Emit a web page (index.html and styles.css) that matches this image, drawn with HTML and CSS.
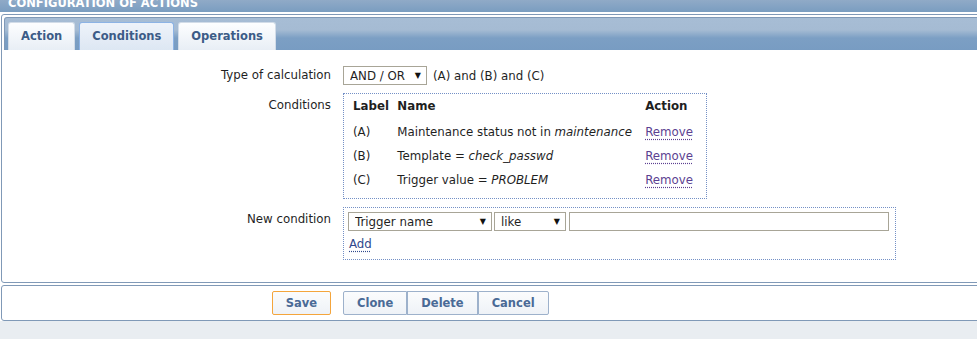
FILE: index.html
```html
<!DOCTYPE html>
<html lang="en">
<head>
    <meta charset="UTF-8">
    <title>Configuration of actions</title>
    <link rel="stylesheet" href="styles.css">
</head>
<body>
<div class="page">

    <div class="header">
        <span class="header-title">CONFIGURATION OF ACTIONS</span>
    </div>

    <!-- Action form -->
    <div class="box">
        <div class="tabs">
            <a class="tab" href="#">Action</a>
            <a class="tab active" href="#">Conditions</a>
            <a class="tab" href="#">Operations</a>
        </div>

        <div class="form-list">
            <div class="form-row">
                <label>Type of calculation</label>
                <div class="field inline">
                    <div class="select-wrap calc-select">
                        <select><option>AND / OR</option></select>
                        <span class="caret">&#9660;</span>
                    </div>
                    <span>(A) and (B) and (C)</span>
                </div>
            </div>

            <div class="form-row top">
                <label>Conditions</label>
                <div class="field">
                    <div class="dotted-box cond-box">
                        <table class="cond-table">
                            <tr>
                                <th class="col-label">Label</th>
                                <th class="col-name">Name</th>
                                <th>Action</th>
                            </tr>
                            <tr>
                                <td>(A)</td>
                                <td>Maintenance status not in <em>maintenance</em></td>
                                <td><a class="link visited" href="#">Remove</a></td>
                            </tr>
                            <tr>
                                <td>(B)</td>
                                <td>Template = <em>check_passwd</em></td>
                                <td><a class="link visited" href="#">Remove</a></td>
                            </tr>
                            <tr>
                                <td>(C)</td>
                                <td>Trigger value = <em>PROBLEM</em></td>
                                <td><a class="link visited" href="#">Remove</a></td>
                            </tr>
                        </table>
                    </div>
                </div>
            </div>

            <div class="form-row top new-row">
                <label>New condition</label>
                <div class="field">
                    <div class="dotted-box new-box">
                        <div class="new-inputs">
                            <div class="select-wrap type-select">
                                <select><option>Trigger name</option></select>
                                <span class="caret">&#9660;</span>
                            </div>
                            <div class="select-wrap op-select">
                                <select><option>like</option></select>
                                <span class="caret">&#9660;</span>
                            </div>
                            <input type="text" class="text-input">
                        </div>
                        <div class="add-line"><a class="link" href="#">Add</a></div>
                    </div>
                </div>
            </div>
        </div>
    </div>

    <!-- Buttons -->
    <div class="box button-box">
        <div class="form-row">
            <div class="label-cell"><button class="btn btn-main">Save</button></div>
            <div class="field btn-group">
                <button class="btn">Clone</button><button class="btn">Delete</button><button class="btn">Cancel</button>
            </div>
        </div>
    </div>

    <div class="footer"></div>
</div>
</body>
</html>
```

FILE: styles.css
```css
/* Global styles */
body {
    margin: 0;
    font-family: "DejaVu Sans", Verdana, sans-serif;
    font-size: 11.8px;
    color: #1f1f1f;
    background-color: #fff;
    overflow: hidden;
}

.page {
    width: 990px;
}

/* Page header */
.header {
    height: 12px;
    overflow: hidden;
    padding-left: 8px;
    background: linear-gradient(#90aac7, #7a9dc0);
}

.header-title {
    display: block;
    margin-top: -4px;
    line-height: 14px;
    font-size: 11.5px;
    font-weight: bold;
    color: #fff;
}

/* Boxes */
.box {
    margin: 2px 0 0 1px;
    padding: 2px;
    border: 1px solid #8099b7;
    border-radius: 3px;
    background-color: #fff;
}

/* Tabs */
.tabs {
    display: flex;
    align-items: flex-end;
    gap: 4px;
    padding: 4px 0 0 3px;
    border: 1px solid #8099b7;
    border-bottom: none;
    border-radius: 3px 3px 0 0;
    background: linear-gradient(#a7bdd5 0px, #a5bbd3 12px, #7c9fc4 20px, #789cc2 100%);
}

.tab {
    display: block;
    padding: 0 12px;
    line-height: 27px;
    font-size: 11.5px;
    font-weight: bold;
    color: #3c5c87;
    text-decoration: none;
    border: 1px solid #d2dce8;
    border-bottom: none;
    border-radius: 3px 3px 0 0;
    background: linear-gradient(#fdfeff, #e8eef5);
}

.tab.active {
    border-color: #8cb3e5;
    background: linear-gradient(#eef3fa, #dde7f3);
}

/* Form layout */
.form-list {
    padding: 16px 0 20px;
}

.form-row {
    display: flex;
    align-items: flex-start;
    margin-bottom: 8px;
}

.form-row:last-child {
    margin-bottom: 0;
}

.new-row {
    margin-top: 7px;
}

.form-row label,
.label-cell {
    width: 327px;
    flex: none;
    text-align: right;
    line-height: 19px;
}

.form-row.top label {
    padding-top: 3px;
}

.field {
    margin-left: 12px;
}

.field.inline {
    display: flex;
    align-items: center;
    gap: 6px;
}

/* Select boxes */
.select-wrap {
    display: inline-flex;
    align-items: center;
    box-sizing: border-box;
    height: 19px;
    padding: 0 5px 0 6px;
    border: 1px solid #a8a597;
    background-color: #fff;
}

.select-wrap select {
    flex: 1;
    min-width: 0;
    appearance: none;
    -webkit-appearance: none;
    border: none;
    padding: 0;
    margin: 0;
    background: transparent;
    font-family: inherit;
    font-size: 11.8px;
    color: #1f1f1f;
    outline: none;
}

.caret {
    font-size: 8px;
    color: #111;
}

.calc-select {
    width: 84px;
}

.type-select {
    width: 144px;
}

.op-select {
    width: 72px;
}

.text-input {
    box-sizing: border-box;
    width: 320px;
    height: 19px;
    margin: 0 0 0 1px;
    border: 1px solid #a8a597;
    padding: 0 3px;
}

/* Dotted boxes */
.dotted-box {
    border: 1px dotted #7490c6;
}

.cond-box {
    width: 346px;
    padding: 0 10px 6px 6px;
}

.cond-table {
    border-collapse: collapse;
}

.cond-table th {
    padding: 4px 3px 6px;
    line-height: 16px;
    text-align: left;
    font-weight: bold;
}

.cond-table td {
    padding: 4px 3px;
    line-height: 16px;
    white-space: nowrap;
}

.cond-table .col-label {
    width: 40px;
}

.cond-table .col-name {
    width: 247px;
}

.new-box {
    width: 541px;
    padding: 4px 6px 6px 4px;
}

.new-inputs {
    display: flex;
    gap: 2px;
}

.add-line {
    margin-top: 4px;
    line-height: 18px;
    padding-left: 1px;
}

/* Links */
.link {
    color: #30498c;
    text-decoration: underline dotted;
    text-underline-offset: 3px;
}

.link.visited {
    color: #5c3f91;
}

/* Buttons */
.button-box {
    padding: 5px 2px;
}

.button-box .form-row {
    margin: 0;
}

.btn-group {
    display: flex;
}

.btn {
    box-sizing: border-box;
    height: 24px;
    padding: 0 13px;
    font-family: inherit;
    font-size: 11.5px;
    font-weight: bold;
    color: #4a6a96;
    border: 1px solid #9db1cb;
    background: linear-gradient(#fbfcfd, #eef2f7);
    cursor: pointer;
}

.btn-main {
    border-color: #f4a53c;
    border-radius: 2px;
}

.btn-group .btn:first-child {
    border-radius: 2px 0 0 2px;
}

.btn-group .btn:last-child {
    border-radius: 0 2px 2px 0;
}

.footer {
    height: 40px;
    background-color: #e9edf1;
}
```
